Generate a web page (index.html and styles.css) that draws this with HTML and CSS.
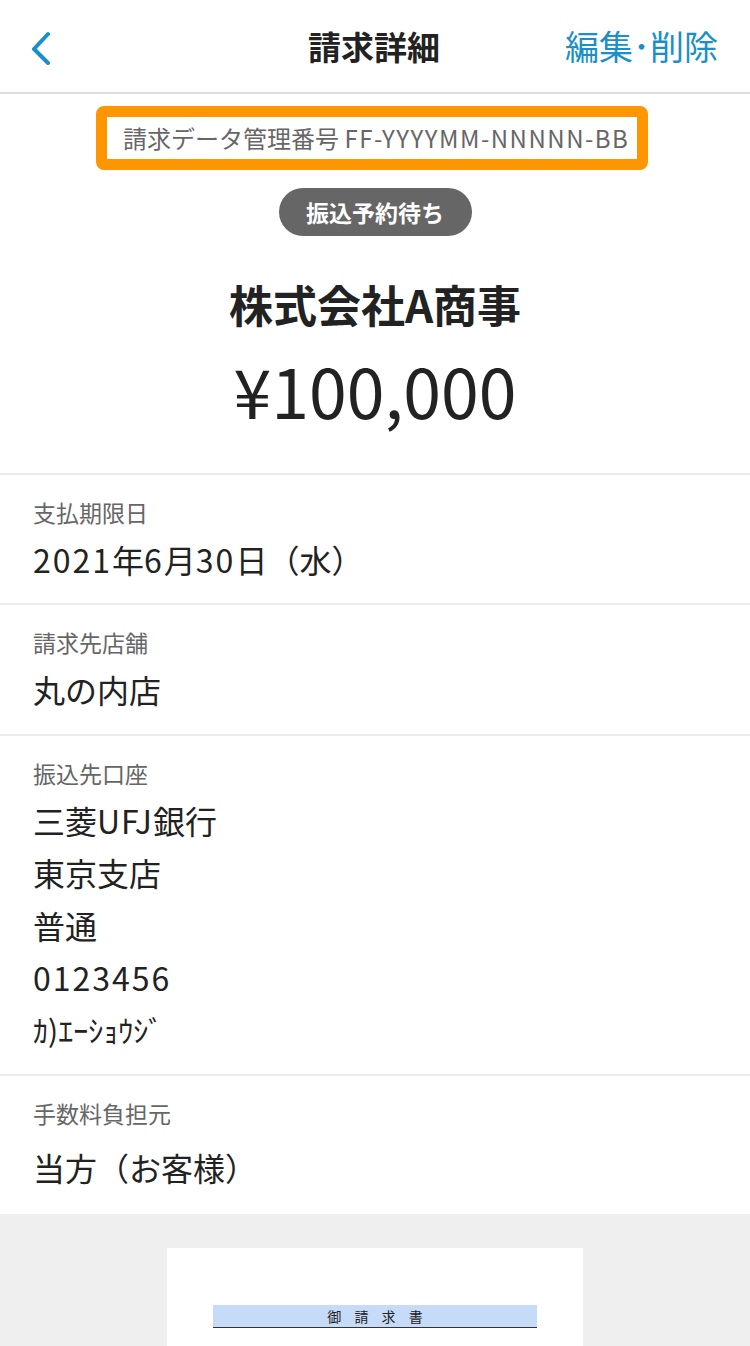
FILE: index.html
```html
<!DOCTYPE html>
<html lang="ja">
<head>
<meta charset="utf-8">
<title>請求詳細</title>
<link rel="stylesheet" href="styles.css">
</head>
<body>
<header class="nav">
  <div class="nav-back">
    <svg width="24" height="36" viewBox="0 0 24 36"><path d="M18 5 L4 20 L18 34" fill="none" stroke="#1a8fc9" stroke-width="4" stroke-linecap="round" stroke-linejoin="round"/></svg>
  </div>
  <div class="nav-title">請求詳細</div>
  <div class="nav-action">編集･削除</div>
</header>
<section class="summary">
  <div class="idbox"><span class="idtext">請求データ管理番号 <span class="latin">FF-YYYYMM-NNNNN-BB</span></span></div>
  <div class="badge">振込予約待ち</div>
  <div class="company">株式会社A商事</div>
  <div class="amount">¥100,000</div>
</section>
<section class="row">
  <div class="label">支払期限日</div>
  <div class="value"><span class="num">2021</span>年<span class="num">6</span>月<span class="num">30</span>日（水）</div>
</section>
<section class="row">
  <div class="label">請求先店舗</div>
  <div class="value">丸の内店</div>
</section>
<section class="row">
  <div class="label">振込先口座</div>
  <div class="value">三菱<span class="num narrow">UFJ</span>銀行</div>
  <div class="value">東京支店</div>
  <div class="value">普通</div>
  <div class="value"><span class="num">0123456</span></div>
  <div class="value kana">ｶ)ｴｰｼｮｳｼﾞ</div>
</section>
<section class="row last">
  <div class="label">手数料負担元</div>
  <div class="value spaced">当方（お客様）</div>
</section>
<section class="preview">
  <div class="paper">
    <div class="doc-title">御 請 求 書</div>
  </div>
</section>
</body>
</html>
```
FILE: styles.css
```css
* { box-sizing: border-box; }
html, body { margin: 0; padding: 0; }
body {
  width: 750px;
  height: 1346px;
  overflow: hidden;
  background: #efefef;
  font-family: "Noto Sans CJK JP", "Noto Sans", sans-serif;
  color: #222;
}
.nav {
  height: 94px;
  background: #fff;
  border-bottom: 2px solid #dedede;
  display: grid;
  grid-template-columns: 1fr auto 1fr;
  align-items: center;
  padding: 0 32px 0 30px;
}
.nav-back { display: flex; align-items: center; padding-top: 2px; }
.nav-title {
  font-size: 33px;
  font-weight: 700;
  color: #222;
  line-height: 1;
}
.nav-action {
  justify-self: end;
  font-size: 34px;
  color: #1a8fc9;
  line-height: 1;
}
.summary {
  background: #fff;
  display: flex;
  flex-direction: column;
  align-items: center;
  padding: 12px 0 0;
  height: 381px;
  border-bottom: 2px solid #ebebeb;
}
.idbox {
  width: 552px;
  height: 64px;
  margin-right: 6px;
  border: 11px solid #ff9500;
  border-radius: 8px;
  background: #fff;
  display: flex;
  align-items: center;
  padding-left: 16px;
}
.idtext {
  font-size: 24px;
  color: #666;
  line-height: 1;
  white-space: nowrap;
}
.latin { letter-spacing: 1.5px; }
.badge {
  margin-top: 18px;
  height: 48px;
  width: 193px;
  border-radius: 24px;
  background: #666;
  color: #fff;
  font-weight: 700;
  font-size: 23px;
  display: flex;
  align-items: center;
  justify-content: center;
}
.company {
  margin-top: 38px;
  font-size: 44px;
  font-weight: 700;
  line-height: 60px;
  color: #222;
}
.amount {
  margin-top: 6px;
  font-size: 68px;
  line-height: 100px;
  color: #222;
}
.row {
  background: #fff;
  padding: 21px 33px 18px;
  border-bottom: 2px solid #ebebeb;
}
.row.last { border-bottom: none; padding-bottom: 21px; }
.label {
  font-size: 23px;
  line-height: 32px;
  color: #666;
}
.value {
  font-size: 32px;
  line-height: 52.4px;
  color: #222;
}
.num { letter-spacing: 2px; }
.num.narrow { letter-spacing: 1px; }
.label + .value { margin-top: 5px; }
.label + .value.spaced { margin-top: 12px; }
.value.kana { font-size: 30px; }
.preview {
  padding-top: 34px;
  display: flex;
  justify-content: center;
}
.paper {
  width: 416px;
  height: 200px;
  background: #fff;
  padding-top: 57px;
  display: flex;
  justify-content: center;
}
.doc-title {
  width: 324px;
  height: 23px;
  background: #c6dbf7;
  border-bottom: 1.5px solid #333;
  text-align: center;
  font-size: 14px;
  line-height: 22px;
  letter-spacing: 5px;
  padding-left: 5px;
  color: #222;
}
```
